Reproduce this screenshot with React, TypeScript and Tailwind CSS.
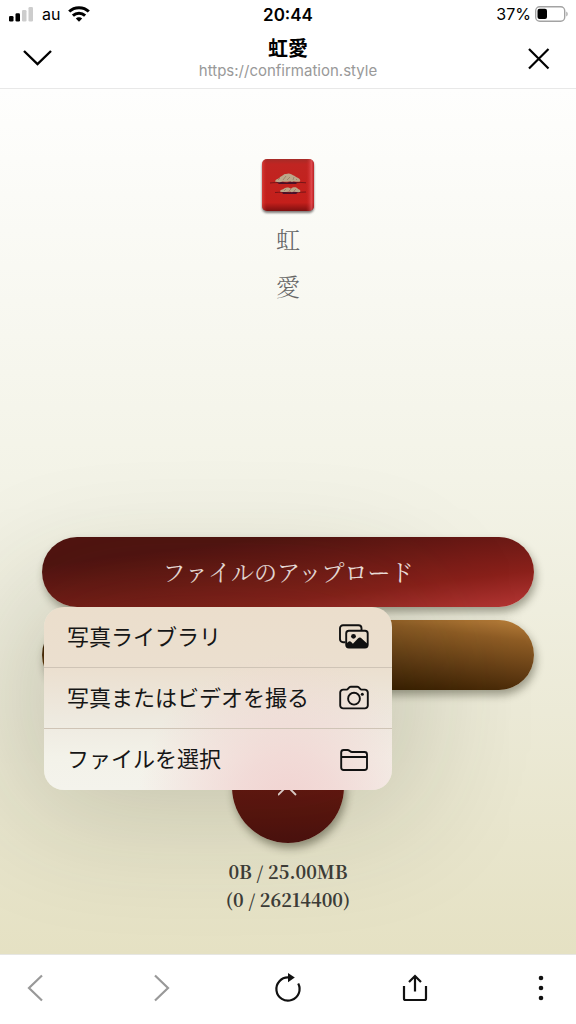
import type { ReactNode } from "react";

const SANS = "font-['Inter','Noto_Sans_CJK_JP',sans-serif]";
const SERIF = "font-['Noto_Serif_CJK_JP','Noto_Serif_JP','Liberation_Serif','Noto_Sans_CJK_JP',serif]";

function StatusBar() {
  return (
    <div className="grid h-7 grid-cols-3 items-center pr-2 pl-2 text-base text-black">
      <div className="flex items-center gap-2">
        <svg width="26" height="16" viewBox="0 0 26 16" aria-hidden="true">
          <rect x="1" y="10" width="4.5" height="5.5" rx="1.3" />
          <rect x="7.5" y="7.3" width="4.5" height="8.2" rx="1.3" />
          <rect x="14" y="4" width="4.5" height="11.5" rx="1.3" fill="#cdcdcd" />
          <rect x="20.5" y="1" width="4.5" height="14.5" rx="1.3" fill="#cdcdcd" />
        </svg>
        <span>au</span>
        <svg width="22" height="16" viewBox="0 0 22 16" fill="none" stroke="#000" strokeWidth="3" aria-hidden="true">
          <path d="M1.2 5.5C6.5.4 15.5.4 20.8 5.5" />
          <path d="M4.900 9.700c3.500-3.300 8.700-3.300 12.200 0" />
          <path d="M11 15.800 7.800 12.600c1.700-1.700 4.700-1.700 6.400 0z" fill="#000" stroke="none" />
        </svg>
      </div>
      <time className="pt-0.5 text-center text-[17px] leading-6 font-semibold">20:44</time>
      <div className="flex items-center justify-end gap-1">
        <span>37%</span>
        <svg width="33" height="16" viewBox="0 0 33 16" aria-hidden="true">
          <rect x=".7" y=".7" width="29" height="14.6" rx="4" fill="none" stroke="#a3a3a3" strokeWidth="1.4" />
          <rect x="2.5" y="2.7" width="9.5" height="10.4" rx="2" />
          <path d="M31.3 5.5c1.8.8 1.8 4.2 0 5z" fill="#a3a3a3" />
        </svg>
      </div>
    </div>
  );
}

function Header() {
  return (
    <header className="border-b border-[#e8e8e8] bg-white">
      <StatusBar />
      <div className="flex h-[60px] items-center justify-between px-[22px]">
        <button type="button" aria-label="閉じる" className="flex w-8 justify-start">
          <svg width="30" height="20" viewBox="0 0 30 20" fill="none" stroke="#000" strokeWidth="2.4">
            <path d="m2 3 13.500 13L29 3" />
          </svg>
        </button>
        <div className="pt-px text-center">
          <h1 className="text-[20px] leading-6 font-bold text-black">虹愛</h1>
          <p className="text-[15px] leading-5 text-[#999]">https://confirmation.style</p>
        </div>
        <button type="button" aria-label="終了" className="flex w-8 justify-end">
          <svg width="32" height="24" viewBox="0 0 32 24" fill="none" stroke="#000" strokeWidth="2.2">
            <path d="m7 3 19.500 19.500M26.500 3 7 22.500" />
          </svg>
        </button>
      </div>
    </header>
  );
}

function BrandMark() {
  return (
    <svg width="56" height="58" viewBox="0 0 56 58" aria-hidden="true">
      <defs>
        <linearGradient id="lacquer" x1="0" y1="0" x2="0" y2="1">
          <stop offset="0" stopColor="#a52c28" />
          <stop offset=".1" stopColor="#c02522" />
          <stop offset=".84" stopColor="#c41f1b" />
          <stop offset="1" stopColor="#7d1010" />
        </linearGradient>
        <linearGradient id="edge" x1="0" y1="0" x2="1" y2="0">
          <stop offset="0" stopColor="#ef5a50" stopOpacity=".5" />
          <stop offset=".1" stopColor="#c51c19" stopOpacity="0" />
          <stop offset=".84" stopColor="#c51c19" stopOpacity="0" />
          <stop offset=".95" stopColor="#f4626b" stopOpacity=".6" />
          <stop offset="1" stopColor="#b72027" stopOpacity=".6" />
        </linearGradient>
        <filter id="soft" x="-10%" y="-10%" width="120%" height="130%">
          <feGaussianBlur stdDeviation="1" />
        </filter>
      </defs>
      <rect x="2" y="4" width="52" height="52" rx="5" fill="#3c3434" opacity=".65" filter="url(#soft)" />
      <rect x="2" y="2" width="52" height="52" rx="5" fill="url(#lacquer)" />
      <rect x="2" y="2" width="52" height="52" rx="5" fill="url(#edge)" />
      <path d="M10 26c8-1 13 0 18 .2s11-1.500 18-.4M15 35.500c10-.8 18 .3 31-.5" fill="none" stroke="#641014" strokeWidth=".8" />
      <path d="M17 25.500c5-2 9 1.500 12-.5s7 1.500 9 0l-2 2H19zM22 35.500c4-1.500 6 1 9-.5s6 1 8 0l-3 2H23z" fill="#4b1028" />
      <path d="M15 24.500c1-3 4-2.500 5-4.500 3-1 3-3 6-3 3-1.500 6 .2 7 1.200 2 .3 3 2 4 2.300 2 .5 4 2.500 3 4-3 1-5-.6-8 .5-3-1.300-6 .4-9-.4-3 1-5 .9-8-.1z" fill="#bda78a" />
      <path d="M20 34.500c0-2 3-1.500 4-3 3-1.600 5-.8 7 .2 2-2 6-1.800 7 .3 2 .2 3 2 2 3-3 .6-5-.8-8 .2-4-1.200-8 .7-12-.7z" fill="#bda78a" />
      <path d="m18 23 2-2m3 2 3-4m1 4 3-3m3 3 1-3m2 3 1-1M24 34l2-2m3 2 2-2m3 2 2-2" stroke="#867159" strokeWidth=".6" />
    </svg>
  );
}

function PhotosIcon() {
  return (
    <svg width="30" height="26" viewBox="0 0 30 26" fill="none" stroke="#111" strokeWidth="1.900" aria-hidden="true">
      <path d="M6.500 18.300H4a3 3 0 0 1-3-3V4.200a3 3 0 0 1 3-3h15.500a3 3 0 0 1 3 3v2" />
      <rect x="7.200" y="6.800" width="21.500" height="16.700" rx="2.700" />
      <circle cx="14.500" cy="12.300" r="2.400" fill="#111" stroke="none" />
      <path d="M7.500 19.800c1.700-2.500 3.200-3.500 5-1.500l1.400 1.400 5-5.200c1.500-1.500 2.800-1 4 .2l5.800 5.300v1.800a2 2 0 0 1-2 2H9.200a2 2 0 0 1-2-2z" fill="#111" stroke="none" />
    </svg>
  );
}

function CameraIcon() {
  return (
    <svg width="30" height="26" viewBox="0 0 30 26" fill="none" stroke="#111" strokeWidth="1.900" aria-hidden="true">
      <path d="M4.200 4.600h3.300c1.800 0 2-2.800 4.300-2.800h6.500c2.300 0 2.500 2.800 4.300 2.800h3.200a3 3 0 0 1 3 3v12.800a3 3 0 0 1-3 3H4.200a3 3 0 0 1-3-3V7.600a3 3 0 0 1 3-3z" />
      <circle cx="15" cy="13.700" r="5.900" />
      <circle cx="23.300" cy="9.300" r="1.500" fill="#111" stroke="none" />
    </svg>
  );
}

function FolderIcon() {
  return (
    <svg width="30" height="26" viewBox="0 0 30 26" fill="none" stroke="#111" strokeWidth="1.900" aria-hidden="true">
      <path d="M2.200 10V5.500a2.500 2.500 0 0 1 2.500-2.500h3.800c2.300 0 2.300 2 4.500 2h12.500A2.500 2.500 0 0 1 28 7.500v13a2.500 2.500 0 0 1-2.500 2.500H4.700a2.500 2.500 0 0 1-2.500-2.500V10H28" />
    </svg>
  );
}

function MenuItem({ label, icon }: { label: string; icon: ReactNode }) {
  return (
    <button
      type="button"
      role="menuitem"
      className="flex h-[61px] w-full items-center justify-between pr-[23px] pl-[23px] text-left text-[22px] text-[#161616]"
    >
      <span className="whitespace-nowrap">{label}</span>
      {icon}
    </button>
  );
}

function SourceMenu() {
  return (
    <div
      role="menu"
      className={`absolute top-full left-[2px] z-10 w-[348px] divide-y divide-[#cfc4b6] overflow-hidden rounded-[20px] bg-[radial-gradient(circle_at_70%_108%,#f1d3d1_0%,#f1d3d1c0_16%,#f1dcd700_48%),linear-gradient(180deg,#ebdecc_0%,#ebdfcf_33%,#eeeae0_62%,#f3f2e9_82%,#f4f3ec_100%)] shadow-[0_0_130px_20px_rgba(40,44,20,0.2)] ${SANS}`}
    >
      <MenuItem label="写真ライブラリ" icon={<PhotosIcon />} />
      <MenuItem label="写真またはビデオを撮る" icon={<CameraIcon />} />
      <MenuItem label="ファイルを選択" icon={<FolderIcon />} />
    </div>
  );
}

function Content() {
  return (
    <main className={`flex flex-1 flex-col items-center overflow-hidden bg-[linear-gradient(180deg,#fefefd_0%,#f3f3e7_45%,#ecead7_72%,#e5e1c3_100%)] pt-[68px] pb-10 ${SERIF}`}>
      <BrandMark />
      <div className="flex flex-col text-center text-2xl leading-[47px] font-light text-[#666]">
        <span>虹</span>
        <span>愛</span>
      </div>
      <div className="mt-[228px] flex w-full flex-col items-center px-[42px]">
        <div className="relative z-10 w-full">
          <button
            type="button"
            aria-haspopup="menu"
            aria-expanded="true"
            className="block h-[70px] w-full rounded-full bg-[linear-gradient(173deg,#511310_0%,#511310_22%,#8a201a_72%,#b13432_97%)] text-[23px] text-[#f5e6e3] shadow-[2px_5px_9px_rgba(40,40,20,0.4)]"
          >
            ファイルのアップロード
          </button>
          <SourceMenu />
        </div>
        <button
          type="button"
          aria-label="撮影"
          className="mt-[13px] h-[70px] w-full rounded-full bg-[linear-gradient(187deg,#b47b38_3%,#8f5d25_17%,#5e3912_45%,#3a1f00_66%,#7a4a12_90%)] shadow-[2px_5px_9px_rgba(40,40,20,0.4)]"
        />
        <button
          type="button"
          aria-label="取り消す"
          className="mt-[41px] flex size-28 items-center justify-center rounded-full bg-[linear-gradient(180deg,#8a201a_0%,#66150f_50%,#4b100d_100%)] shadow-[2px_5px_9px_rgba(40,40,20,0.45)]"
        >
          <svg width="20" height="20" viewBox="0 0 20 20" fill="none" stroke="#f0dfdd" strokeWidth="1.800">
            <path d="M0 0 18 18M18 0 0 18" />
          </svg>
        </button>
        <p className="mt-[14px] text-center text-[18px] leading-7 font-bold text-[#3d3d38]">
          0B / 25.00MB
          <br />
          (0 / 26214400)
        </p>
      </div>
    </main>
  );
}

function Toolbar() {
  return (
    <nav aria-label="ブラウザ" className="flex h-[70px] items-center justify-between border-t border-[#e6e6e2] bg-white px-5 pb-1">
      <button type="button" aria-label="戻る" disabled>
        <svg width="30" height="30" viewBox="0 0 30 30" fill="none" stroke="#999" strokeWidth="2.200">
          <path d="M22 2.500 9 15l13 12.500" />
        </svg>
      </button>
      <button type="button" aria-label="進む" disabled>
        <svg width="30" height="30" viewBox="0 0 30 30" fill="none" stroke="#999" strokeWidth="2.200">
          <path d="m8 2.500 13 12.500L8 27.500" />
        </svg>
      </button>
      <button type="button" aria-label="再読み込み">
        <svg width="30" height="30" viewBox="0 0 30 30" fill="none" stroke="#111" strokeWidth="2.200">
          <path d="M25.200 10.500A11.600 11.600 0 1 1 15.500 4.400" />
          <path d="m15 0 6.800 4.500L15 9.300z" fill="#111" stroke="none" />
        </svg>
      </button>
      <button type="button" aria-label="共有">
        <svg width="30" height="30" viewBox="0 0 30 30" fill="none" stroke="#111" strokeWidth="2.200">
          <path d="M4 13v12.500a1.500 1.500 0 0 0 1.500 1.500h19a1.500 1.500 0 0 0 1.500-1.500V13M15 18.500V3.500M9 9l6-6 6 6" />
        </svg>
      </button>
      <button type="button" aria-label="メニュー">
        <svg width="30" height="30" viewBox="0 0 30 30" fill="#111">
          <circle cx="15" cy="5" r="2.300" />
          <circle cx="15" cy="15" r="2.300" />
          <circle cx="15" cy="25" r="2.300" />
        </svg>
      </button>
    </nav>
  );
}

export default function App() {
  return (
    <div lang="ja" className={`flex min-h-screen flex-col bg-white ${SANS}`}>
      <Header />
      <Content />
      <Toolbar />
    </div>
  );
}
